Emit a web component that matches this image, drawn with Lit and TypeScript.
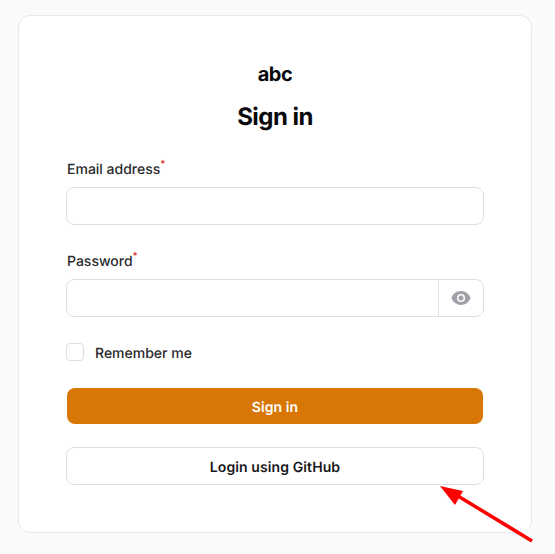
import { LitElement, html, css } from 'lit';
import { customElement } from 'lit/decorators.js';

@customElement('app-root')
export class AppRoot extends LitElement {
  static styles = css`
    :host {
      display: block;
      position: relative;
      box-sizing: border-box;
      width: 555px;
      height: 554px;
      padding: 15px 23px 0 18px;
      overflow: hidden;
      background: #fafafa;
      font-family: Inter, "Liberation Sans", sans-serif;
      color: #09090b;
      text-rendering: geometricPrecision;
    }

    * {
      box-sizing: border-box;
    }

    .card {
      display: flex;
      flex-direction: column;
      height: 518px;
      padding: 48px 47px 0;
      background: #fff;
      border: 1px solid #e9e9ea;
      border-radius: 12px;
    }

    .brand {
      height: 20px;
      font-size: 20px;
      font-weight: 700;
      line-height: 20px;
      letter-spacing: -0.5px;
      text-align: center;
    }

    h1 {
      margin: 17px 0 0;
      font-size: 24px;
      font-weight: 700;
      line-height: 32px;
      letter-spacing: -0.55px;
      text-align: center;
    }

    form {
      display: flex;
      flex-direction: column;
      margin-top: 26px;
    }

    .field {
      display: flex;
      flex-direction: column;
      gap: 8px;
      margin-bottom: 26px;
    }

    label {
      height: 20px;
      padding: 1px 0 0 1px;
      font-size: 14px;
      font-weight: 500;
      line-height: 20px;
      color: #2a2a2e;
    }

    sup {
      font-size: 10px;
      line-height: 0;
      vertical-align: 7px;
      color: #dc2626;
    }

    .input {
      display: flex;
      height: 38px;
      background: #fff;
      border: 1px solid #dfdfe2;
      border-radius: 8px;
    }

    .input span {
      flex: 1;
    }

    .reveal {
      display: flex;
      flex: none;
      align-items: center;
      justify-content: center;
      width: 45px;
      border-left: 1px solid #dfdfe2;
    }

    .reveal svg {
      width: 20px;
      height: 20px;
      fill: #a1a1aa;
    }

    .remember {
      display: flex;
      align-items: center;
      gap: 11px;
      height: 18px;
      margin-bottom: 27px;
      font-size: 14px;
      font-weight: 500;
      color: #2a2a2e;
    }

    .remember span:last-child {
      padding-top: 2px;
    }

    .box {
      width: 18px;
      height: 18px;
      background: #fff;
      border: 1px solid #dfdfe2;
      border-radius: 4px;
    }

    .btn {
      display: flex;
      align-items: center;
      justify-content: center;
      font-size: 14px;
      font-weight: 600;
      line-height: 20px;
      letter-spacing: 0.1px;
      border-radius: 8px;
    }

    .primary {
      height: 36px;
      margin: 0 1px 23px;
      padding-top: 3px;
      color: #fff;
      background: #d97706;
    }

    .secondary {
      height: 38px;
      padding-top: 3px;
      color: #18181b;
      background: #fff;
      border: 1px solid #dfdfe2;
    }

    .arrow {
      position: absolute;
      top: 0;
      left: 0;
      width: 555px;
      height: 554px;
      pointer-events: none;
    }
  `;

  render() {
    return html`
      <div class="card">
        <div class="brand">abc</div>
        <h1>Sign in</h1>
        <form>
          <div class="field">
            <label>Email address<sup>*</sup></label>
            <div class="input"></div>
          </div>
          <div class="field">
            <label>Password<sup>*</sup></label>
            <div class="input">
              <span></span>
              <div class="reveal">
                <svg viewBox="0 0 20 20">
                  <path d="M10 12.5a2.5 2.5 0 1 0 0-5 2.5 2.5 0 0 0 0 5Z" />
                  <path
                    fill-rule="evenodd"
                    d="M.664 10.59a1.651 1.651 0 0 1 0-1.186A10.004 10.004 0 0 1 10 3c4.257 0 7.893 2.66 9.336 6.41.147.381.146.804 0 1.186A10.004 10.004 0 0 1 10 17c-4.257 0-7.893-2.66-9.336-6.41ZM14 10a4 4 0 1 1-8 0 4 4 0 0 1 8 0Z"
                    clip-rule="evenodd"
                  />
                </svg>
              </div>
            </div>
          </div>
          <div class="remember">
            <span class="box"></span>
            <span>Remember me</span>
          </div>
          <div class="btn primary">Sign in</div>
          <div class="btn secondary">Login using GitHub</div>
        </form>
      </div>
      <svg class="arrow" viewBox="0 0 555 554">
        <path d="M532 541 453 493" stroke="#ff0000" stroke-width="3.5" fill="none" />
        <path d="M440 486 463 491 455 505Z" fill="#ff0000" />
      </svg>
    `;
  }
}
